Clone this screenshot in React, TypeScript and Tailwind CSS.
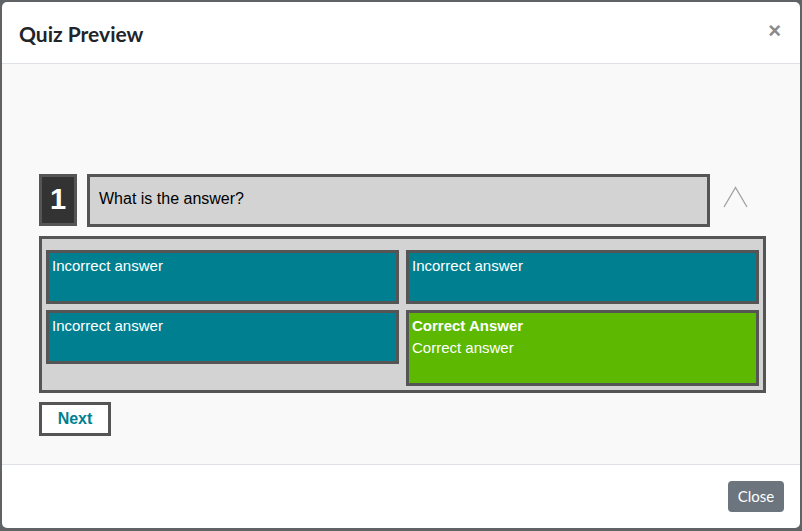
import React from 'react';

const answers = [
  { text: 'Incorrect answer', correct: false },
  { text: 'Incorrect answer', correct: false },
  { text: 'Incorrect answer', correct: false },
  { text: 'Correct answer', correct: true },
];

export default function App() {
  return (
    <div className="w-[802px] h-[531px] bg-[#5f6366] pt-[2px] pl-[2px] pr-[2px] pb-[3px]">
      <div className="h-full bg-white rounded-[5px] flex flex-col overflow-hidden">
        {/* header */}
        <div className="h-[62px] flex items-center justify-between pl-[17px] pr-[19px] border-b border-[#dee2e6] shrink-0">
          <h1 className="text-[21px] font-bold text-[#212529] font-['Lato',sans-serif] pt-[2px]">Quiz Preview</h1>
          <button className="text-[#8a8a8a] text-[22px] font-bold leading-none font-['Liberation_Sans',sans-serif] -mt-[4px]">×</button>
        </div>

        {/* body */}
        <div className="flex-1 bg-[#f9f9f9] pt-[110px] pl-[37px] font-['Liberation_Sans',Arial,sans-serif]">
          <div className="flex items-start">
            <div className="w-[38px] h-[52px] bg-[#333] border-[3px] border-[#555] flex items-center justify-center text-white text-[29px] font-bold">
              1
            </div>
            <div className="ml-[10px] w-[623px] h-[53px] bg-[#d3d3d3] border-[3px] border-[#555] px-[9px] pt-[10px] text-[16px] text-black">
              What is the answer?
            </div>
            <svg className="ml-[13px] mt-[12px]" width="25" height="22" viewBox="0 0 25 22" fill="none">
              <path d="M1 21 L12.5 1.5 L24 21" stroke="#a0a0a0" strokeWidth="1.3" />
            </svg>
          </div>

          <div className="mt-[9px] w-[727px] bg-[#d3d3d3] border-[3px] border-[#555] pt-[11px] px-[4px] pb-[4px] grid grid-cols-2 gap-x-[7px] gap-y-[6px] items-start">
            {answers.map((a, i) => (
              <div
                key={i}
                className={
                  a.correct
                    ? 'h-[76px] bg-[#5cb800] border-[3px] border-[#555] px-[3px] pt-[2px] text-white text-[15px] leading-[22px]'
                    : 'h-[54px] bg-[#007f91] border-[3px] border-[#555] px-[3px] pt-[2px] text-white text-[15px] leading-[22px]'
                }
              >
                {a.correct && <div className="font-bold">Correct Answer</div>}
                <div>{a.text}</div>
              </div>
            ))}
          </div>

          <button className="mt-[9px] w-[72px] h-[34px] bg-white border-[3px] border-[#555] text-[#007f91] font-bold text-[16px]">
            Next
          </button>
        </div>

        {/* footer */}
        <div className="h-[64px] border-t border-[#dee2e6] flex items-center justify-end pr-[16px] shrink-0">
          <button className="w-[56px] h-[31px] bg-[#6c757d] text-white text-[15px] rounded-[4px] font-['Lato',sans-serif]">
            Close
          </button>
        </div>
      </div>
    </div>
  );
}
